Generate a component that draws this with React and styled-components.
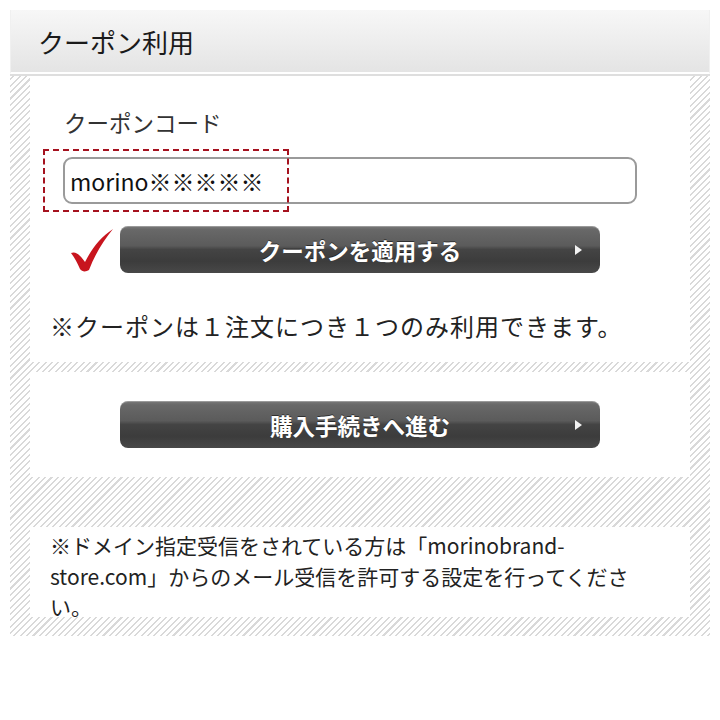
import React from "react";
import styled, { createGlobalStyle } from "styled-components";

const GlobalStyle = createGlobalStyle`
  body {
    margin: 0;
    background: #fff;
    font-family: "Noto Sans CJK JP", "Noto Sans", sans-serif;
    color: #222;
  }
`;

const hatch = `repeating-linear-gradient(135deg, #ffffff 0 2px, #d9d9d9 2px 3.5px, #ffffff 3.5px 4.5px)`;

const Page = styled.div`
  padding: 10px;
  width: 700px;
`;

const Header = styled.div`
  height: 62px;
  display: flex;
  align-items: center;
  padding-left: 27px;
  background: linear-gradient(#f7f7f7, #e4e4e4);
  border-left: 1px solid #f0f0f0;
  border-right: 1px solid #f0f0f0;
  border-bottom: 2px solid #fff;
  box-shadow: 0 2px 0 #dedede;
  font-size: 26px;
  color: #1a1a1a;
`;

const Hatched = styled.div`
  margin-top: 2px;
  background: ${hatch};
  padding: 0 20px 19px;
  display: flex;
  flex-direction: column;
`;

const Panel = styled.div`
  background: #fff;
  margin-top: ${(p) => p.$gap || 0}px;
  padding: ${(p) => p.$pad};
  height: ${(p) => (p.$height ? `${p.$height}px` : "auto")};
  box-sizing: border-box;
`;

const Label = styled.div`
  font-size: 22.5px;
  line-height: 28px;
  margin-left: 34px;
  color: #333;
`;

const InputWrap = styled.div`
  position: relative;
  margin: 21px 0 0 33px;
  width: 574px;
`;

const Input = styled.div`
  height: 43px;
  border: 2px solid #9a9a9a;
  border-radius: 9px;
  display: flex;
  align-items: center;
  padding-left: 5px;
  font-size: 23px;
  color: #111;
`;

const Dashed = styled.div`
  position: absolute;
  left: -20px;
  top: -8px;
  width: 242px;
  height: 59px;
  border: 2px dashed #a5121f;
`;

const ButtonRow = styled.div`
  display: flex;
  align-items: center;
  margin-top: ${(p) => p.$top}px;
`;

const Check = styled.svg`
  width: 44px;
  height: 44px;
  margin: 0 6px 0 40px;
`;

const Button = styled.div`
  position: relative;
  width: 480px;
  height: 47px;
  margin-left: ${(p) => p.$left || 0}px;
  border-radius: 8px;
  background: linear-gradient(
    #7a7a7a 0%,
    #686868 8%,
    #5b5b5b 42%,
    #444 50%,
    #3c3c3c 75%,
    #484848 100%
  );
  box-shadow: inset 0 1px 0 rgba(255, 255, 255, 0.25);
  color: #fff;
  font-size: 22.5px;
  font-weight: bold;
  display: flex;
  align-items: center;
  justify-content: center;
  text-shadow: 0 -1px 0 rgba(0, 0, 0, 0.5);
`;

const Arrow = styled.span`
  position: absolute;
  right: 18px;
  top: 50%;
  margin-top: -5px;
  width: 0;
  height: 0;
  border-top: 5px solid transparent;
  border-bottom: 5px solid transparent;
  border-left: 7px solid #f2f2f2;
`;

const Note = styled.div`
  font-size: 24px;
  line-height: 30px;
  letter-spacing: 1px;
  margin: 38px 0 0 20px;
  color: #222;
`;

const Notice = styled.div`
  font-size: 21px;
  line-height: 30.5px;
  color: #222;
  padding: 3px 20px 0 20px;
`;

export default function App() {
  return (
    <Page>
      <GlobalStyle />
      <Header>クーポン利用</Header>
      <Hatched>
        <Panel $pad="32px 0 21px">
          <Label>クーポンコード</Label>
          <InputWrap>
            <Dashed />
            <Input>morino※※※※※</Input>
          </InputWrap>
          <ButtonRow $top={22}>
            <Check viewBox="0 0 44 44">
              <path
                d="M1 25 C6 23 10 27 15 34 C22 20 31 9 43 1 C34 12 25 26 19 42 C16 44 12 44 10 41 C7 34 4 29 1 25 Z"
                fill="#c8151e"
              />
            </Check>
            <Button>
              クーポンを適用する
              <Arrow />
            </Button>
          </ButtonRow>
          <Note>※クーポンは１注文につき１つのみ利用できます。</Note>
        </Panel>
        <Panel $gap={10} $pad="29px 0 29px">
          <ButtonRow $top={0}>
            <Button $left={90}>
              購入手続きへ進む
              <Arrow />
            </Button>
          </ButtonRow>
        </Panel>
        <Panel $gap={50} $pad="0" $height={90}>
          <Notice>
            ※ドメイン指定受信をされている方は「morinobrand-
            <br />
            store.com」からのメール受信を許可する設定を行ってくださ
            <br />
            い。
          </Notice>
        </Panel>
      </Hatched>
    </Page>
  );
}
